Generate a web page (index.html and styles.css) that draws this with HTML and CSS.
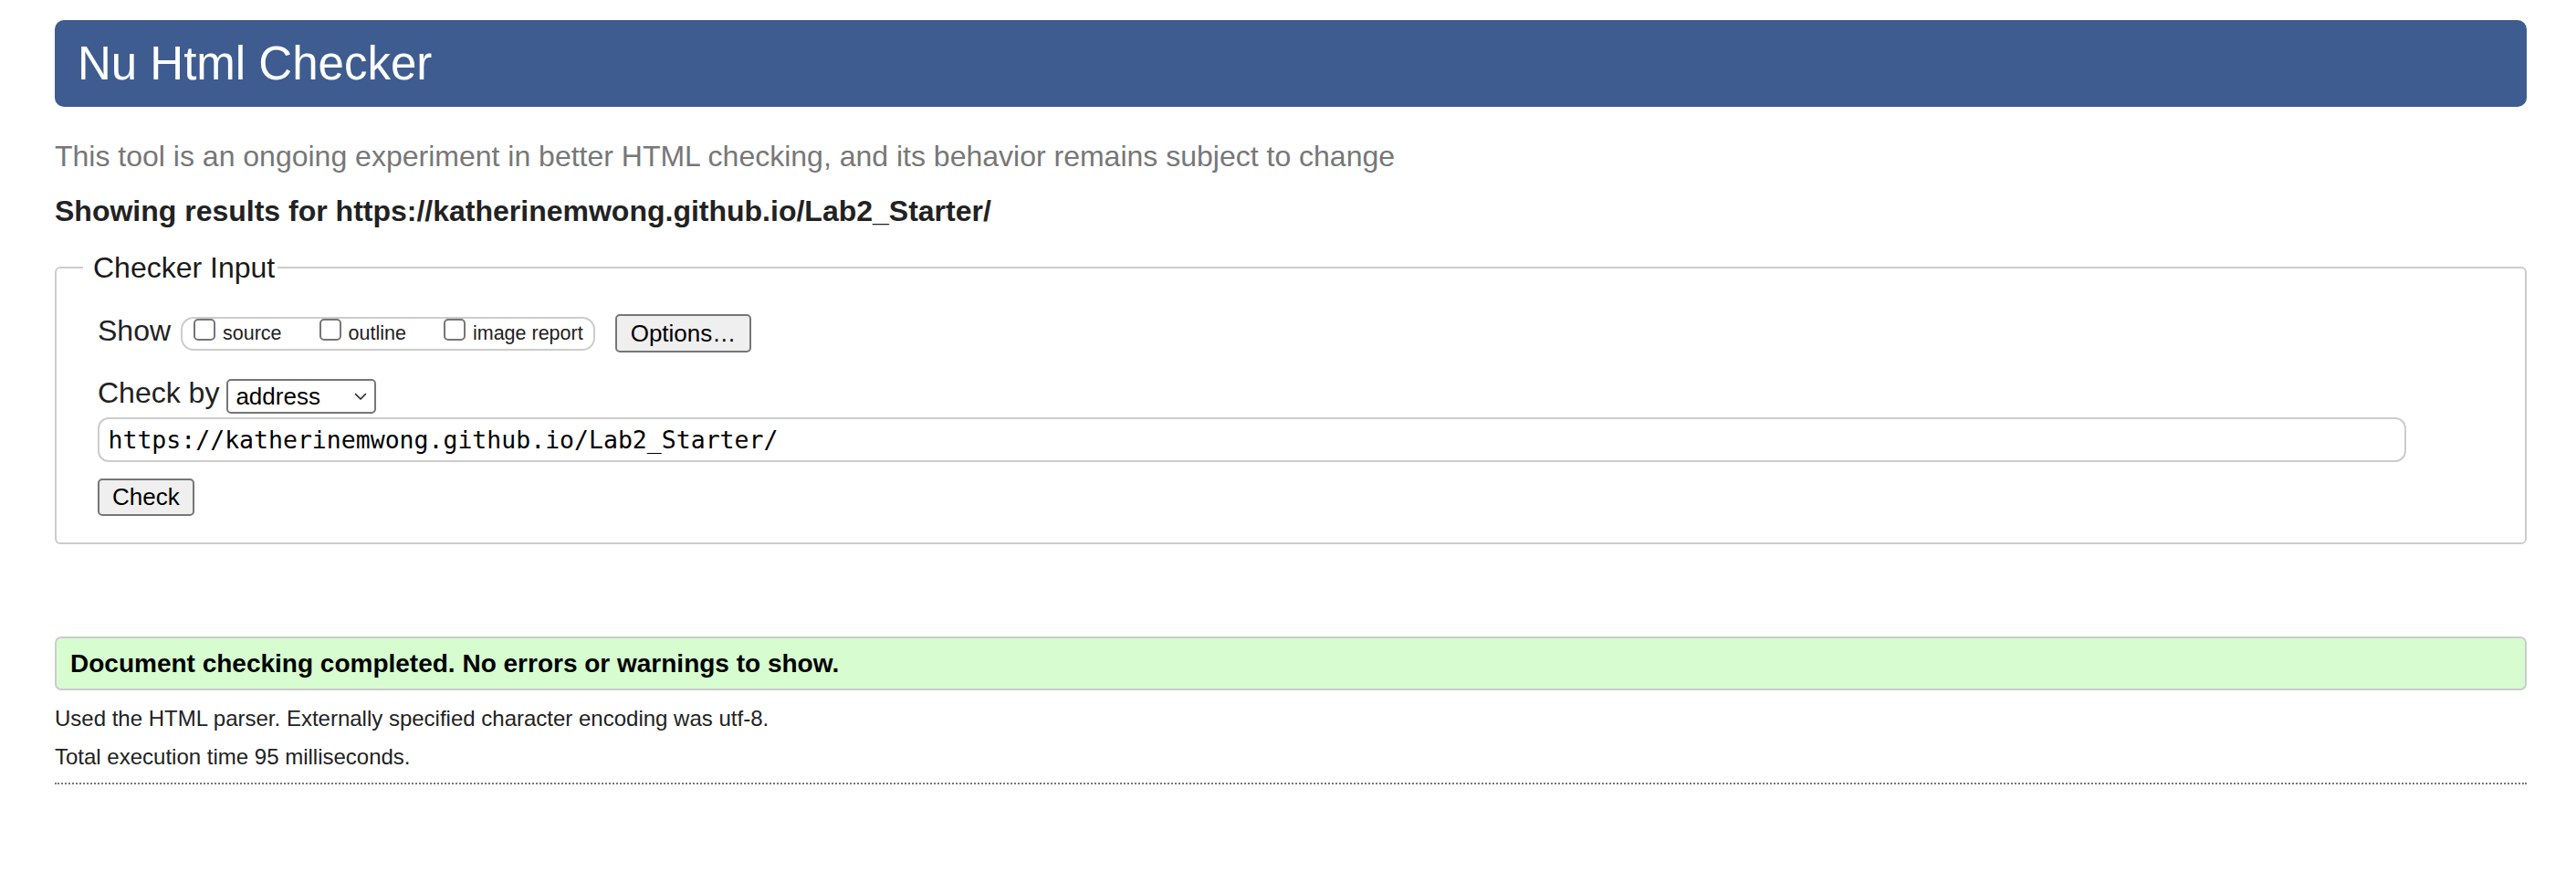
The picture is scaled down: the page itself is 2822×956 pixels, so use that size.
FILE: index.html
```html
<!DOCTYPE html>
<html lang="en">
<head>
<meta charset="utf-8">
<title>Nu Html Checker</title>
<link rel="stylesheet" href="styles.css">
</head>
<body>
<main class="page">
  <h1 class="title">Nu Html Checker</h1>
  <p class="about">This tool is an ongoing experiment in better HTML checking, and its behavior remains subject to change</p>
  <p class="showing">Showing results for https://katherinemwong.github.io/Lab2_Starter/</p>
  <form class="checker">
    <fieldset class="input-set">
      <legend class="legend">Checker Input</legend>
      <div class="row row-show">
        <span class="row-label">Show</span>
        <div class="checks">
          <label class="check"><input type="checkbox" class="box"><span class="check-text">source</span></label>
          <label class="check"><input type="checkbox" class="box"><span class="check-text">outline</span></label>
          <label class="check"><input type="checkbox" class="box"><span class="check-text">image report</span></label>
        </div>
        <button type="button" class="btn btn-options">Options…</button>
      </div>
      <div class="row row-by">
        <span class="row-label">Check by</span>
        <span class="select-wrap">
          <select class="select"><option>address</option></select>
          <svg class="chev" width="14" height="9" viewBox="0 0 14 9" aria-hidden="true"><path d="M1.5 1.5 L7 7 L12.5 1.5" fill="none" stroke="#222" stroke-width="1.6" stroke-linecap="round" stroke-linejoin="round"/></svg>
        </span>
      </div>
      <input class="url" type="url" value="https://katherinemwong.github.io/Lab2_Starter/">
      <button type="button" class="btn btn-check">Check</button>
    </fieldset>
  </form>
  <div class="success">Document checking completed. No errors or warnings to show.</div>
  <p class="meta">Used the HTML parser. Externally specified character encoding was utf-8.</p>
  <p class="meta">Total execution time 95 milliseconds.</p>
  <hr class="rule">
</main>
</body>
</html>
```

FILE: styles.css
```css
* {
  box-sizing: border-box;
}

html,
body {
  margin: 0;
  background: #ffffff;
}

body {
  font-family: "Liberation Sans", Arial, Helvetica, sans-serif;
  color: #222222;
}

.page {
  padding: 22px 54px 40px 60px;
}

.title {
  margin: 0;
  height: 95px;
  padding: 0 0 0 25px;
  background: #3e5c8f;
  color: #ffffff;
  font-size: 51px;
  font-weight: normal;
  line-height: 95px;
  border-radius: 10px;
}

.about {
  margin: 34px 0 0;
  font-size: 32px;
  line-height: 40px;
  color: #777777;
}

.showing {
  margin: 20px 0 0;
  font-size: 32px;
  line-height: 40px;
  font-weight: bold;
  color: #222222;
}

.checker {
  margin: 22px 0 0;
}

.input-set {
  margin: 0;
  padding: 31px 45px 29px 45px;
  border: 2px solid #cccccc;
  border-radius: 6px;
  min-width: 0;
}

.legend {
  margin-left: -16px;
  padding: 0 3px 0 11px;
  font-size: 32px;
  line-height: 40px;
  color: #1a1a1a;
}

.row {
  display: flex;
  align-items: flex-start;
}

.row-label {
  font-size: 32px;
  line-height: 36px;
  color: #222222;
  white-space: nowrap;
}

.checks {
  display: flex;
  gap: 41px;
  height: 37px;
  margin: 3px 0 0 11px;
  padding: 0 11px 0 12px;
  border: 2px solid #cccccc;
  border-radius: 14px;
}

.check {
  display: flex;
  align-items: flex-start;
  gap: 8px;
}

.box {
  appearance: none;
  -webkit-appearance: none;
  margin: 0;
  width: 24px;
  height: 24px;
  border: 2px solid #767676;
  border-radius: 5px;
  background: #ffffff;
}

.check-text {
  font-size: 21.5px;
  line-height: 33px;
  color: #222222;
  white-space: nowrap;
}

.btn {
  appearance: none;
  -webkit-appearance: none;
  font-family: "Liberation Sans", Arial, Helvetica, sans-serif;
  font-size: 26px;
  color: #000000;
  background: #efefef;
  border: 2px solid #767676;
  border-radius: 5px;
  margin: 0;
}

.btn-options {
  margin-left: 22px;
  height: 42px;
  padding: 0 15px;
}

.row-by {
  margin-top: 26px;
}

.select-wrap {
  position: relative;
  display: block;
  margin: 3px 0 0 8px;
  width: 164px;
  height: 38px;
}

.select {
  appearance: none;
  -webkit-appearance: none;
  display: block;
  width: 164px;
  height: 38px;
  margin: 0;
  padding: 0 0 0 8px;
  font-family: "Liberation Sans", Arial, Helvetica, sans-serif;
  font-size: 26px;
  color: #000000;
  background: #ffffff;
  border: 2px solid #767676;
  border-radius: 5px;
}

.chev {
  position: absolute;
  top: 15px;
  right: 10px;
  pointer-events: none;
}

.url {
  display: block;
  width: calc(100% - 85px);
  height: 49px;
  margin: 4px 0 0;
  padding: 0 9.5px;
  font-family: "DejaVu Sans Mono", "Liberation Mono", monospace;
  font-size: 26.5px;
  color: #000000;
  background: #ffffff;
  border: 2px solid #cccccc;
  border-radius: 12px;
  outline: none;
}

.btn-check {
  display: block;
  margin-top: 18px;
  height: 41px;
  padding: 0 14px;
}

.success {
  margin: 101px 0 0;
  height: 59px;
  padding: 0 15px;
  font-size: 28px;
  line-height: 55px;
  font-weight: bold;
  color: #000000;
  background: #d6fcd0;
  border: 2px solid #cccccc;
  border-radius: 7px;
}

.meta {
  margin: 16px 0 0;
  font-size: 24px;
  line-height: 30px;
  color: #222222;
}

.meta + .meta {
  margin-top: 12px;
}

.rule {
  margin: 13px 0 0;
  height: 0;
  border: 0;
  border-top: 2px dotted #777777;
}
```
